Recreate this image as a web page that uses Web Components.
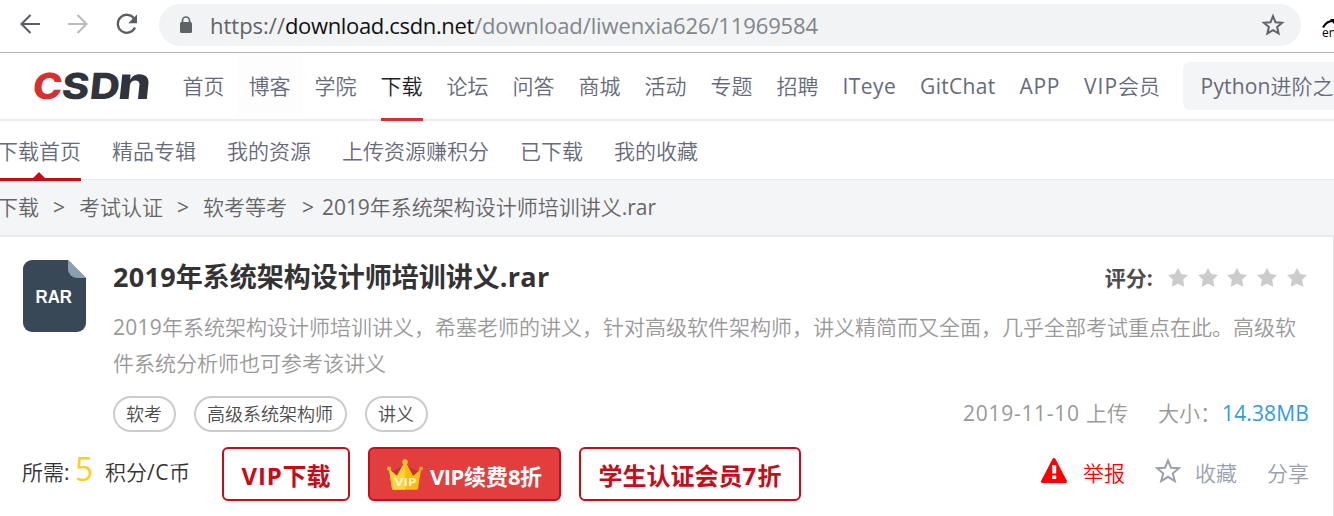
<!DOCTYPE html>
<html lang="zh-CN">
<head>
<meta charset="utf-8">
<title>2019年系统架构设计师培训讲义.rar</title>
<style>
html,body{margin:0;padding:0;background:#fff;overflow:hidden}
</style>
</head>
<body>
<download-page></download-page>
<script>
const define = (name, html, setup) => {
  const t = document.createElement('template');
  t.innerHTML = html;
  customElements.define(name, class extends HTMLElement {
    constructor() {
      super();
      this.attachShadow({mode: 'open'}).appendChild(t.content.cloneNode(true));
    }
    connectedCallback() { if (setup) setup(this, this.shadowRoot); }
  });
};

/* One line of text; with a "w" attribute its Latin letters are tracked to reach that width. */
define('text-run', `<style>
:host{display:inline-block;white-space:pre;flex:none}
</style><span id="t"></span>`, (el, root) => {
  const t = root.getElementById('t');
  t.textContent = '';
  const spans = [];
  let n = 0;
  for (const part of (el.getAttribute('t') || '').split(/([\x20-\x7e]+)/)) {
    if (!part) continue;
    if (/^[\x20-\x7e]/.test(part)) {
      const s = document.createElement('span');
      s.textContent = part;
      s.style.fontWeight = 'var(--latin-weight, inherit)';
      spans.push(s); n += part.length; t.appendChild(s);
    } else t.appendChild(document.createTextNode(part));
  }
  const w = parseFloat(el.getAttribute('w'));
  if (w && n) {
    const ls = (w - t.getBoundingClientRect().width) / n;
    spans.forEach(s => s.style.letterSpacing = ls.toFixed(3) + 'px');
  }
});

define('browser-bar', `<style>
:host{display:flex;height:52px;border-bottom:1px solid #b3b3b5;background:#fff;box-sizing:content-box}
svg{display:block;flex:none}
.tools{display:flex;width:159px;height:50px;flex:none}
.tools svg{margin:9px 0 0 15px}
.tools svg+svg{margin-left:18px}
.omni{display:flex;align-items:center;width:1142px;height:42px;margin-top:4px;border-radius:21px;background:#f1f3f4;flex:none}
.lock{margin:0 0 0 19px}
.url{display:flex;margin-left:16px;width:1051px;font-size:22px;line-height:42px;color:#5f6368;margin-top:-1px}
.host{color:#111}.path{color:#80868b}
.ext{margin:16px 0 0 20px}
</style>
<div class="tools">
<svg width="30" height="30" viewBox="0 0 30 30" fill="none" stroke="#5a5d61" stroke-width="2.1"><path d="M25 15H7M15.500 6 6.500 15l9 9"/></svg>
<svg width="30" height="30" viewBox="0 0 30 30" fill="none" stroke="#bababa" stroke-width="2.1"><path d="M5 15h18M14.500 6 23.500 15l-9 9"/></svg>
<svg width="30" height="30" viewBox="0 0 30 30"><path d="M23.300 9.800A9 9 0 1 0 24 18.500" fill="none" stroke="#5a5d61" stroke-width="2.300"/><path d="M26 5.500v8.800h-8.800z" fill="#5a5d61"/></svg>
</div>
<div class="omni">
<svg class="lock" width="16" height="20" viewBox="0 0 16 20"><path d="M4.500 8V5.500a3.500 3.500 0 0 1 7 0V8" fill="none" stroke="#5f6368" stroke-width="1.700"/><rect x="2" y="7" width="12" height="11" rx="1.500" fill="#5f6368"/></svg>
<div class="url"><text-run t="https://" w="75"></text-run><text-run class="host" t="download.csdn.net" w="189"></text-run><text-run class="path" t="/download/liwenxia626/11969584" w="344"></text-run></div>
<svg width="24" height="24" viewBox="0 0 24 24"><path d="M12 3.200l2.500 6.100 6.600.5-5 4.300 1.500 6.400-5.600-3.400-5.600 3.400 1.500-6.400-5-4.300 6.600-.5z" fill="none" stroke="#5f6368" stroke-width="2"/></svg>
</div>
<svg class="ext" width="16" height="24" viewBox="0 0 16 24" overflow="visible"><path d="M2 11.500C5 6 8 5 13 5" fill="none" stroke="#000" stroke-width="2.200"/><path d="M9 3l4 0v5z"/><text x="1" y="21" font-size="12" font-weight="500" font-family="Open Sans, sans-serif" fill="#000">en</text></svg>`);

define('csdn-logo', `<style>:host{display:block;flex:none}svg{display:block;overflow:visible}
text{font:800 36px Inter,"Open Sans",sans-serif}.n{text-transform:lowercase;font-size:45px}</style>
<svg width="124" height="36" viewBox="0 0 124 36"><g transform="translate(3 0) skewX(-6)" fill="#31343c">
<text x="2" y="31" textLength="29.500" lengthAdjust="spacingAndGlyphs" fill="#d92f2f">C</text>
<text x="31" y="31" textLength="27.500" lengthAdjust="spacingAndGlyphs">S</text>
<text x="59" y="31" textLength="30" lengthAdjust="spacingAndGlyphs">D</text>
<text class="n" x="87" y="31" textLength="33" lengthAdjust="spacingAndGlyphs">N</text></g></svg>`);

define('site-nav', `<style>
:host{display:flex;height:66px;border-bottom:2px solid #ececee;color:#666a7a;font-size:21px}
csdn-logo{margin:15px 0 0 30px;width:124px}
nav{display:flex;gap:24px;padding-left:28.600px;line-height:66px;height:68px}
.on{color:#222226;height:68px;box-shadow:inset 0 -3px #d92f2f}
.hover{background:#fdfdfd;margin:0 -12px;padding:0 12px;height:66px}
.search{margin:9px 0 0 22.500px;height:48px;line-height:49px;width:160px;padding-left:18px;border-radius:7px;background:#f4f5f7;box-sizing:border-box;flex:none}
</style>
<csdn-logo></csdn-logo>
<nav><text-run t="首页"></text-run><text-run class="hover" t="博客"></text-run><text-run t="学院"></text-run><text-run class="on" t="下载"></text-run><text-run t="论坛"></text-run><text-run t="问答"></text-run><text-run t="商城"></text-run><text-run t="活动"></text-run><text-run t="专题"></text-run><text-run t="招聘"></text-run><text-run t="ITeye" w="53.500"></text-run><text-run t="GitChat" w="75.500"></text-run><text-run t="APP" w="40.500"></text-run><text-run t="VIP会员" w="76"></text-run></nav>
<div class="search"><text-run t="Python进阶之" w="133"></text-run></div>`);

define('sub-nav', `<style>
:host{display:flex;gap:31px;height:58px;line-height:61px;margin-left:-3px;color:#666a7a;font-size:21px}
.on{position:relative;height:60px}
.on svg{position:absolute;left:0;bottom:0;display:block}
</style>
<div class="on"><text-run t="下载首页"></text-run><svg width="84" height="9" viewBox="0 0 84 9"><path d="M0 6h36l6-6 6 6h36v3H0z" fill="#c70c17"/></svg></div>
<text-run t="精品专辑"></text-run><text-run t="我的资源"></text-run><text-run t="上传资源赚积分"></text-run><text-run t="已下载"></text-run><text-run t="我的收藏"></text-run>`);

define('crumb-bar', `<style>
:host{display:block;height:55px;border-top:1px solid #e9eaed;border-bottom:2px solid #e9eaed;background:#f4f5f7;color:#666;font-size:21px}
div{display:flex;margin-left:-3px;line-height:55px}
i{font-style:normal;font-weight:400;width:40px;text-align:center}
i:last-of-type{width:35px;text-align:right;box-sizing:border-box;padding-right:8px}
</style>
<div><text-run t="下载"></text-run><i>&gt;</i><text-run t="考试认证"></text-run><i>&gt;</i><text-run t="软考等考"></text-run><i>&gt;</i><text-run t="2019年系统架构设计师培训讲义.rar" w="334"></text-run></div>`);

define('file-icon', `<style>:host{display:block;flex:none;width:63px;height:72px}svg{display:block}</style>
<svg width="63" height="72" viewBox="0 0 63 72"><path d="M9 0h36l18 18v45a9 9 0 0 1-9 9H9a9 9 0 0 1-9-9V9a9 9 0 0 1 9-9z" fill="#384857"/><path d="M45 0l18 18H54a9 9 0 0 1-9-9z" fill="#8b9fb3"/><text x="12.500" y="42.500" font-family="Liberation Sans,Arial,sans-serif" font-weight="700" font-size="18.500" textLength="36.500" lengthAdjust="spacingAndGlyphs" fill="#fff">RAR</text></svg>`);

define('star-rating', `<style>:host{display:flex;gap:9.800px}svg{display:block}</style>
`, (el, root) => {
  for (let i = 0; i < 5; i++) root.appendChild(document.createRange().createContextualFragment('<svg width="20" height="19" viewBox="0 0 20 19"><path d="M10 0l3.300 5.900 6.700 1-4.800 4.900 1.100 7-6.300-3-6.300 3 1.100-7L0 6.900l6.700-1z" fill="#ccc"/></svg>'));
});

define('tag-pill', `<style>:host{display:block;height:36px;line-height:33px;box-sizing:border-box;border:2px solid #ccc;border-radius:18px;padding:0 12px 0 11px;color:#4d4d4d;font-size:18px;flex:none;white-space:nowrap}</style><slot></slot>`);

define('action-button', `<style>
:host{display:flex;align-items:center;justify-content:center;height:54px;box-sizing:border-box;border:2px solid #c70c17;border-radius:6px;color:#c70c17;font-size:24px;font-weight:700;--latin-weight:700;flex:none;padding-top:1px}
:host([filled]){background:#e33e3e;border-color:#cc0a1c;color:#fff;font-size:22px}
</style><slot></slot>`);

define('crown-icon', `<style>:host{display:block;margin-right:7px;margin-top:-1px}svg{display:block}</style>
<svg width="36" height="31" viewBox="0 0 36 31"><path d="M4 13L16 7l4 0 12 6-5 8H9z" fill="#bc3535"/><path d="M2 10l8 7 7-13h2l7 13 8-7-3 19.500a1.500 1.500 0 0 1-1.500 1.300H6.500A1.500 1.500 0 0 1 5 29.500z" fill="#fdbb17"/><path d="M2 10l8 7 7-13h1v26.800H6.500A1.500 1.500 0 0 1 5 29.500z" fill="#ffd23f"/><path d="M18 4h1l7 13-8 12.500z" fill="#fdb90b"/><circle cx="2" cy="9.500" r="2" fill="#ffc928"/><circle cx="18" cy="3" r="2.700" fill="#ffc928"/><circle cx="34" cy="9.500" r="2" fill="#f8aa13"/><text x="7.500" y="27" font-family="Open Sans,sans-serif" font-size="11" font-weight="700" textLength="22" lengthAdjust="spacingAndGlyphs" fill="#fff6ce">VIP</text></svg>`);

define('download-card', `<style>
:host{display:block;height:279px;box-sizing:border-box;border-right:1px solid #e6e6e9;padding-left:23px}
.head{display:flex;height:159px}
file-icon{margin-top:23px}
.info{margin-left:27px;width:1197px}
.title{display:flex;justify-content:space-between;height:72px}
h1{margin:0;font-size:27px;line-height:79px;color:#333;font-weight:700;--latin-weight:700}
.score{display:flex;font-size:21px;font-weight:700;--latin-weight:700;line-height:83px;color:#4d4d4d;margin-right:3px}
star-rating{margin:30.500px 0 0 14px}
p{margin:0;display:flex;flex-direction:column;font-size:21px;line-height:36px;color:#999}
.meta{display:flex;height:36px;margin-left:90px;gap:18px}
.facts{display:flex;margin-left:auto;margin-right:24px;font-size:21px;line-height:35px;color:#999}
.facts text-run+text-run{margin-left:30px}
.facts .size{color:#3399ea;margin-left:1px!important}
.actions{display:flex;height:54px;margin-top:15px}
.price{display:flex;width:200px;margin-left:-1px;font-size:21px;line-height:51px;color:#333}
.price b{font-weight:400;font-size:32px;line-height:44px;color:#fc2;width:20px;margin:0 10px 0 6px}
action-button+action-button{margin-left:18px}
.side{display:flex;margin-left:auto;margin-right:24px;font-size:21px;line-height:53px;color:#999fae}
.side svg{display:block;flex:none}
.report{color:#f00;margin:0 30px 0 15px}
.fav{margin:0 30px 0 14px}
</style>
<div class="head"><file-icon></file-icon><div class="info">
<div class="title"><h1><text-run t="2019年系统架构设计师培训讲义.rar" w="436.500"></text-run></h1><div class="score"><text-run t="评分:" w="49"></text-run><star-rating></star-rating></div></div>
<p><text-run t="2019年系统架构设计师培训讲义，希塞老师的讲义，针对高级软件架构师，讲义精简而又全面，几乎全部考试重点在此。高级软" w="1183"></text-run><text-run t="件系统分析师也可参考该讲义"></text-run></p></div></div>
<div class="meta"><tag-pill>软考</tag-pill><tag-pill>高级系统架构师</tag-pill><tag-pill>讲义</tag-pill>
<div class="facts"><text-run t="2019-11-10 上传" w="165"></text-run><text-run t="大小："></text-run><text-run class="size" t="14.38MB" w="87"></text-run></div></div>
<div class="actions"><div class="price"><text-run t="所需:" w="47"></text-run><b>5</b><text-run t="积分/C币" w="85"></text-run></div>
<action-button style="width:128px"><text-run t="VIP下载" w="89"></text-run></action-button>
<action-button filled style="width:193px"><crown-icon></crown-icon><text-run t="VIP续费8折" w="112"></text-run></action-button>
<action-button style="width:222px"><text-run t="学生认证会员7折" w="183"></text-run></action-button>
<div class="side"><svg width="28" height="26" viewBox="0 0 28 26" style="margin-top:10px"><path d="M14 2.500L25.500 24.500H2.500z" fill="#f00" stroke="#f00" stroke-width="3" stroke-linejoin="round"/><path d="M12.200 8h4v8.500h-4zM12.200 18.500h4v3.500h-4z" fill="#fff"/></svg><text-run class="report" t="举报"></text-run>
<svg width="26" height="26" viewBox="0 0 26 26" style="margin-top:11px"><path d="M13 2.500l3 7.200 8 .5-6.200 5.100 2 7.700-6.800-4.200L6.200 23l2-7.700L2 10.200l8-.5z" fill="none" stroke="#999fae" stroke-width="2"/></svg><text-run class="fav" t="收藏"></text-run><text-run t="分享"></text-run></div></div>`);

define('download-page', `<style>
:host{display:block;width:1334px;height:516px;overflow:hidden;background:#fff;font-family:"Open Sans","Noto Sans CJK SC",sans-serif;font-weight:350;--latin-weight:400}
</style>
<browser-bar></browser-bar><site-nav></site-nav><sub-nav></sub-nav><crumb-bar></crumb-bar><download-card></download-card>`);
</script>
</body>
</html>
